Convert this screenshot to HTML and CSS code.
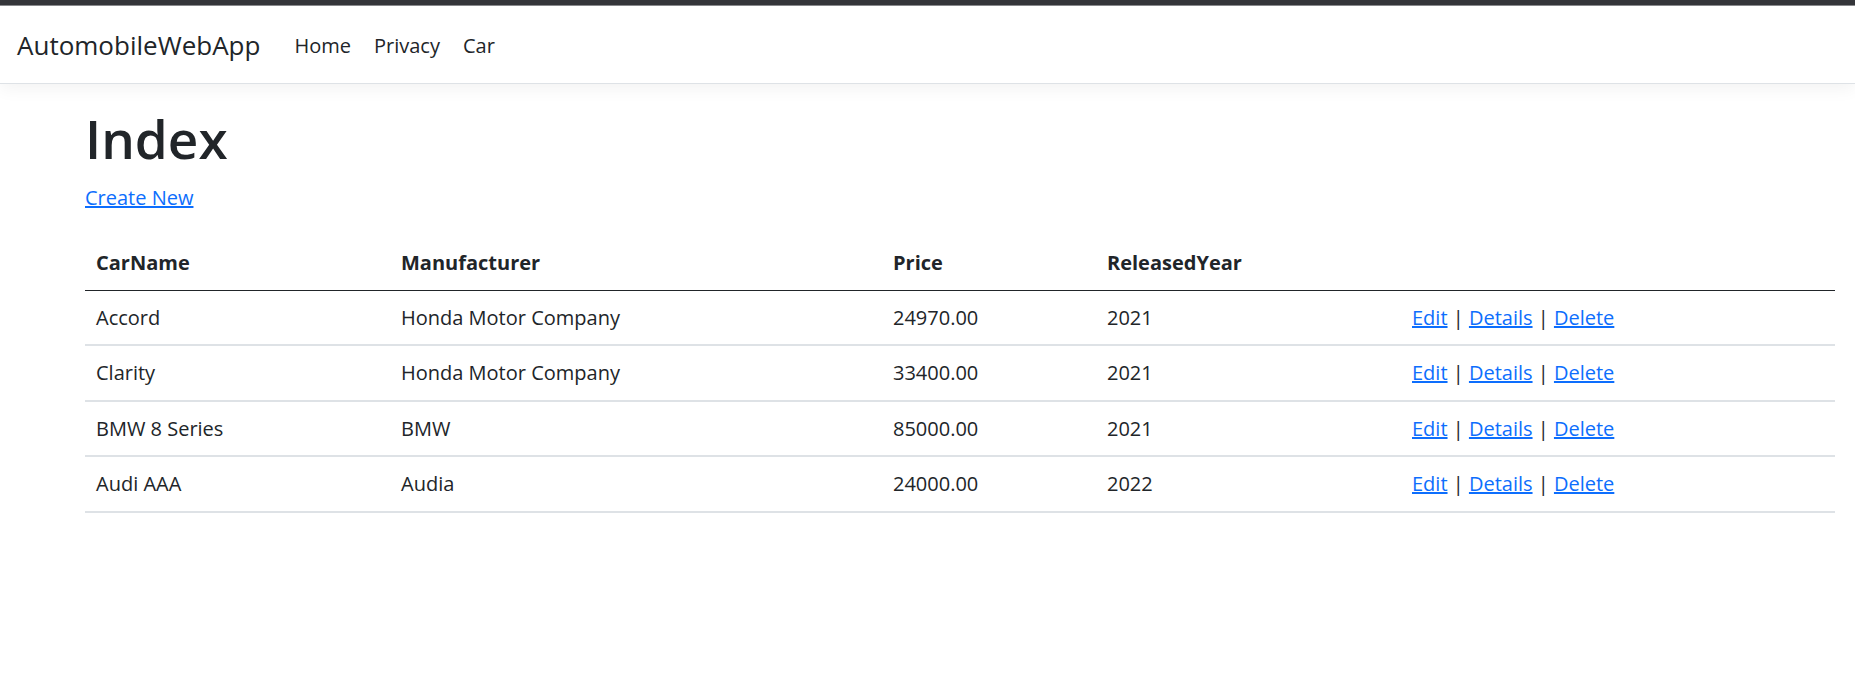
FILE: index.html
```html
<!DOCTYPE html>
<html lang="en">
<head>
<meta charset="utf-8">
<title>Index - AutomobileWebApp</title>
<link rel="stylesheet" href="styles.css">
</head>
<body>
<div class="chrome"></div>
<header class="navbar">
  <a class="brand" href="#">AutomobileWebApp</a>
  <nav class="nav">
    <a class="nav-link" href="#">Home</a>
    <a class="nav-link" href="#">Privacy</a>
    <a class="nav-link" href="#">Car</a>
  </nav>
</header>
<main class="container">
  <h1 class="title">Index</h1>
  <p class="create"><a href="#">Create New</a></p>
  <table class="table">
    <thead>
      <tr>
        <th class="c1">CarName</th>
        <th class="c2">Manufacturer</th>
        <th class="c3">Price</th>
        <th class="c4">ReleasedYear</th>
        <th class="c5"></th>
      </tr>
    </thead>
    <tbody>
      <tr>
        <td>Accord</td><td>Honda Motor Company</td><td>24970.00</td><td>2021</td>
        <td><a href="#">Edit</a> | <a href="#">Details</a> | <a href="#">Delete</a></td>
      </tr>
      <tr>
        <td>Clarity</td><td>Honda Motor Company</td><td>33400.00</td><td>2021</td>
        <td><a href="#">Edit</a> | <a href="#">Details</a> | <a href="#">Delete</a></td>
      </tr>
      <tr>
        <td>BMW 8 Series</td><td>BMW</td><td>85000.00</td><td>2021</td>
        <td><a href="#">Edit</a> | <a href="#">Details</a> | <a href="#">Delete</a></td>
      </tr>
      <tr>
        <td>Audi AAA</td><td>Audia</td><td>24000.00</td><td>2022</td>
        <td><a href="#">Edit</a> | <a href="#">Details</a> | <a href="#">Delete</a></td>
      </tr>
    </tbody>
  </table>
</main>
</body>
</html>
```

FILE: styles.css
```css
html, body {
  margin: 0;
  padding: 0;
  background: #fff;
}
body {
  font-family: "Open Sans", "Noto Sans", sans-serif;
  font-size: 20px;
  line-height: 1.5;
  color: #212529;
}
a {
  color: #0d6efd;
  text-decoration: underline;
}
.chrome {
  height: 5px;
  background: #35363a;
  border-bottom: 1px solid #8a8b8e;
}
.navbar {
  display: flex;
  align-items: center;
  height: 77px;
  padding-left: 17px;
  border-bottom: 1px solid #dee2e6;
  box-shadow: 0 5px 16px rgba(0, 0, 0, 0.05);
  position: relative;
}
.brand {
  font-size: 26px;
  color: #212529;
  text-decoration: none;
  margin-right: 34px;
  padding-top: 2px;
}
.nav {
  display: flex;
  gap: 23px;
  padding-top: 2px;
}
.nav-link {
  color: #212529;
  text-decoration: none;
  font-size: 20px;
}
.container {
  padding: 0 20px 0 85px;
}
.title {
  font-size: 53px;
  font-weight: 600;
  line-height: 1.2;
  margin: 23px 0 12px;
}
.create {
  margin: 0 0 23px;
}
.table {
  width: 100%;
  border-collapse: collapse;
}
.table th, .table td {
  text-align: left;
  padding: 11px 11px;
  line-height: 32px;
  vertical-align: top;
}
.table th {
  font-weight: 700;
  border-bottom: 1px solid #212529;
}
.table td {
  line-height: 31.5px;
  border-bottom: 2px solid #dee2e6;
}
.c1 { width: 283px; }
.c2 { width: 470px; }
.c3 { width: 192px; }
.c4 { width: 283px; }
```
